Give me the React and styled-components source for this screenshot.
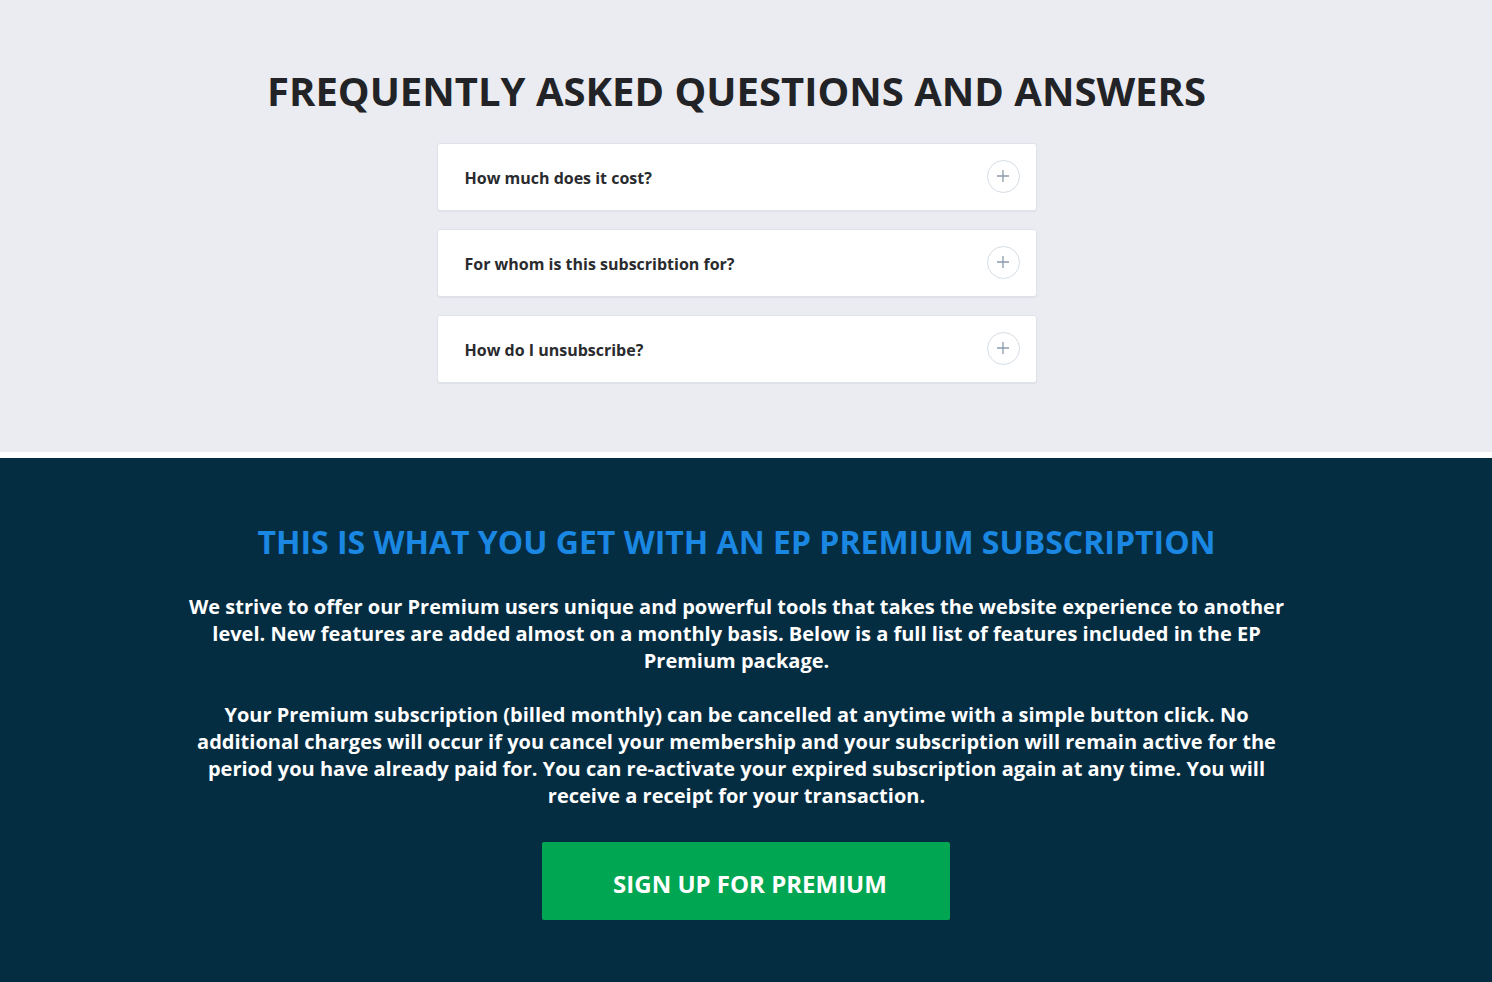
import styled, { createGlobalStyle } from "styled-components"

const GlobalStyle = createGlobalStyle`
  body {
    margin: 0;
    font-family: "Open Sans", "Noto Sans", sans-serif;
    background: #ffffff;
  }
`

const questions = [
  "How much does it cost?",
  "For whom is this subscribtion for?",
  "How do I unsubscribe?",
]

const PlusIcon = () => (
  <svg width="14" height="14" viewBox="0 0 14 14">
    <path d="M7 1v12M1 7h12" stroke="#8a9bab" strokeWidth="1.3" fill="none" />
  </svg>
)

const App = () => {
  return (
    <Page>
      <GlobalStyle />
      <FaqSection>
        <FaqTitle>FREQUENTLY ASKED QUESTIONS AND ANSWERS</FaqTitle>
        <FaqList>
          {questions.map((q) => (
            <FaqItem key={q}>
              <Question>{q}</Question>
              <ToggleButton>
                <PlusIcon />
              </ToggleButton>
            </FaqItem>
          ))}
        </FaqList>
      </FaqSection>

      <PremiumSection>
        <PremiumTitle>THIS IS WHAT YOU GET WITH AN EP PREMIUM SUBSCRIPTION</PremiumTitle>
        <Intro>
          We strive to offer our Premium users unique and powerful tools that takes the website
          experience to another level. New features are added almost on a monthly basis. Below is a
          full list of features included in the EP Premium package.
        </Intro>
        <Intro>
          Your Premium subscription (billed monthly) can be cancelled at anytime with a simple button
          click. No additional charges will occur if you cancel your membership and your subscription
          will remain active for the period you have already paid for. You can re-activate your
          expired subscription again at any time. You will receive a receipt for your transaction.
        </Intro>
        <SignUpButton>SIGN UP FOR PREMIUM</SignUpButton>
      </PremiumSection>
    </Page>
  )
}

export default App

const Page = styled.div`
  display: flex;
  flex-direction: column;
  gap: 6px;
  background: #ffffff;
`

const FaqSection = styled.section`
  background: #ebecf1;
  padding: 64px 19px 69px 0;
  display: flex;
  flex-direction: column;
  align-items: center;
`

const FaqTitle = styled.h1`
  margin: 0 0 26px;
  font-size: 40px;
  line-height: 53px;
  font-weight: 700;
  color: #222326;
  text-align: center;
`

const FaqList = styled.div`
  width: 600px;
  display: flex;
  flex-direction: column;
  gap: 18px;
`

const FaqItem = styled.div`
  height: 68px;
  box-sizing: border-box;
  display: flex;
  align-items: center;
  justify-content: space-between;
  padding: 0 16px 0 27px;
  background: #ffffff;
  border: 1px solid #dde3e8;
  border-radius: 3px;
  box-shadow: 0 1px 1px rgba(0, 0, 0, 0.05);
`

const Question = styled.span`
  font-size: 16px;
  font-weight: 700;
  color: #2a2b2e;
  margin-top: 2px;
`

const ToggleButton = styled.button`
  width: 33px;
  height: 33px;
  padding: 0;
  border-radius: 50%;
  border: 1px solid #d5dde4;
  background: #ffffff;
  display: flex;
  align-items: center;
  justify-content: center;
  margin-top: -2px;
  cursor: pointer;
`

const PremiumSection = styled.section`
  background: #052d42;
  padding: 63px 19px 63px 0;
  display: flex;
  flex-direction: column;
  align-items: center;
`

const PremiumTitle = styled.h2`
  margin: 0 0 31px;
  font-size: 32px;
  line-height: 41px;
  font-weight: 700;
  color: #1a87e2;
  text-align: center;
`

const Intro = styled.p`
  margin: 0 0 27px;
  max-width: 1100px;
  font-size: 20px;
  line-height: 27px;
  font-weight: 700;
  color: #ffffff;
  text-align: center;

  &:last-of-type {
    margin-bottom: 33px;
  }
`

const SignUpButton = styled.button`
  width: 408px;
  height: 78px;
  margin-left: 19px;
  border: none;
  border-radius: 2px;
  background: #00a651;
  color: #ffffff;
  font-family: "Open Sans", "Noto Sans", sans-serif;
  font-size: 24px;
  font-weight: 700;
  padding: 4px 0 0 8px;
  cursor: pointer;
`
